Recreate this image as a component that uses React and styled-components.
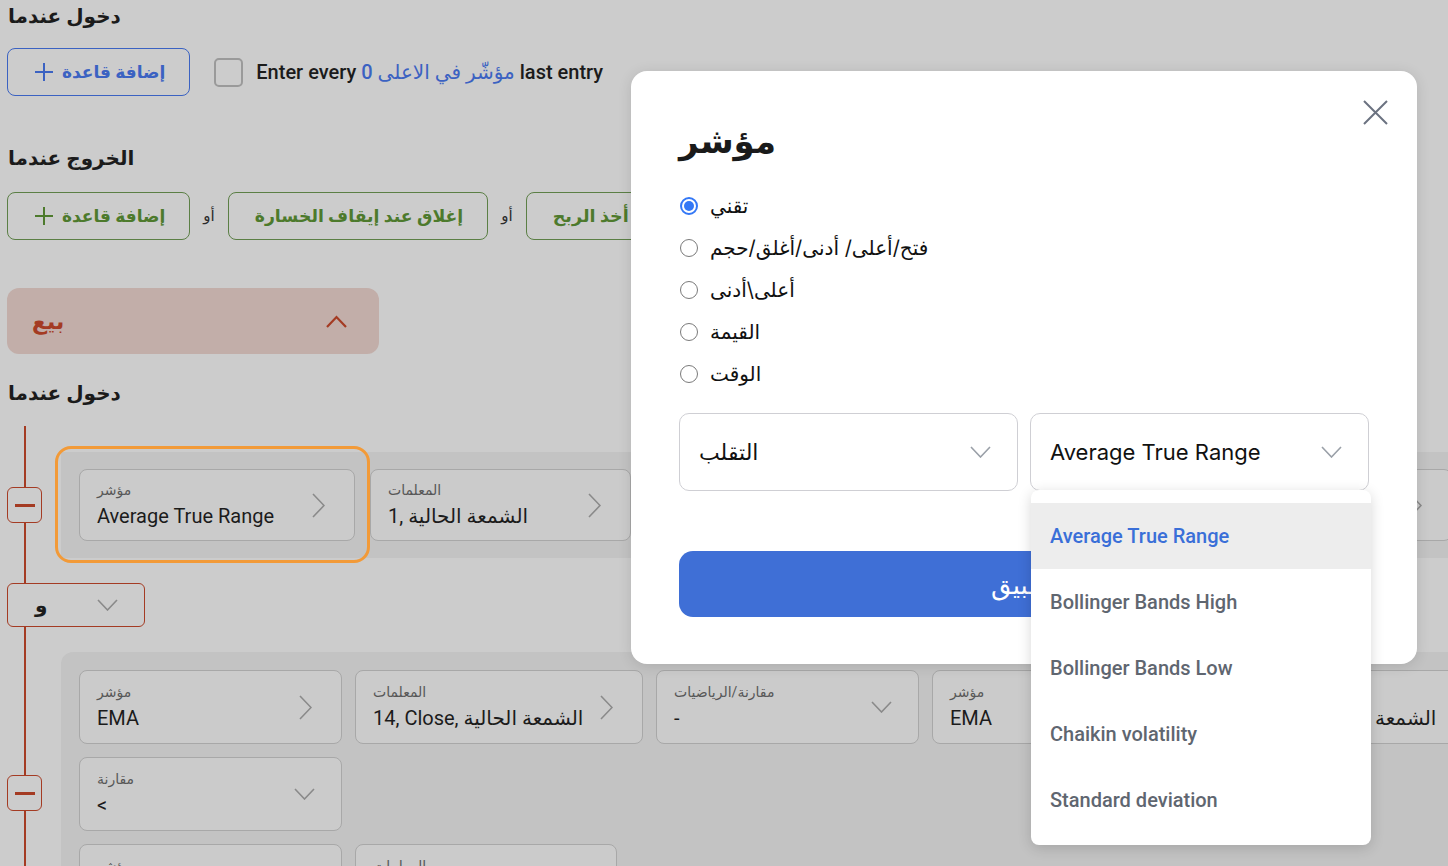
import React from "react";
import styled, { createGlobalStyle } from "styled-components";

const RED = "#a43b23";
const BLUE_DIM = "#3b62c2";
const GREEN_DIM = "#4d7a2c";

const GlobalStyle = createGlobalStyle`
  html, body { margin: 0; padding: 0; background: #cccccc; overflow: hidden; }
  * { box-sizing: border-box; }
`;

const Stage = styled.div`
  position: relative;
  width: 1448px;
  height: 866px;
  overflow: hidden;
  background: #cccccc;
  font-family: Roboto, "DejaVu Sans", sans-serif;
  color: #1b1b1b;
`;

const Page = styled.div`
  padding: 4px 0 0 7px;
  display: flex;
  flex-direction: column;
  align-items: flex-start;
`;

const SectionTitle = styled.h2`
  margin: ${(p) => p.$mt || 0}px 0 0 1px;
  font-size: 20px;
  line-height: 24px;
  font-weight: 700;
  color: #1b1b1b;
`;

const ActionRow = styled.div`
  display: flex;
  align-items: center;
  gap: ${(p) => p.$gap || 10}px;
  margin-top: ${(p) => p.$mt}px;
`;

const OutlineButton = styled.button`
  height: 48px;
  flex-shrink: 0;
  display: flex;
  align-items: center;
  gap: 8px;
  padding: 0 24px 0 26px;
  border: 1px solid ${(p) => (p.$tone === "green" ? "#5b7f45" : BLUE_DIM)};
  border-radius: 8px;
  background: transparent;
  color: ${(p) => (p.$tone === "green" ? GREEN_DIM : BLUE_DIM)};
  font: 700 ${(p) => p.$size || 17}px Roboto, "DejaVu Sans", sans-serif;
  white-space: nowrap;
`;

const OrText = styled.span`
  padding: 0 3px;
  font-size: 15px;
  color: #2a2a2a;
`;

const CheckLabel = styled.label`
  display: flex;
  align-items: center;
  gap: 13px;
  font-size: 20px;
  font-weight: 500;
  white-space: nowrap;
`;

const CheckBox = styled.span`
  width: 29px;
  height: 29px;
  border: 2px solid #9a9a9a;
  border-radius: 5px;
`;

const BlueText = styled.span`
  color: ${BLUE_DIM};
`;

const SellHeader = styled.div`
  margin-top: 48px;
  width: 372px;
  height: 66px;
  display: flex;
  align-items: center;
  justify-content: space-between;
  padding: 0 32px 0 25px;
  background: #c2aea9;
  border-radius: 12px;
  color: ${RED};
  font-size: 22px;
  font-weight: 700;
`;

const Tree = styled.div`
  position: relative;
  align-self: stretch;
  margin-top: 21px;
  padding-top: 26px;
  display: flex;
  flex-direction: column;
  align-items: flex-start;
  gap: 25px;
  &::before {
    content: "";
    position: absolute;
    left: 17px;
    top: 0;
    bottom: 0;
    width: 2px;
    background: ${RED};
  }
`;

const Group = styled.div`
  align-self: stretch;
  display: grid;
  grid-template-columns: 54px 1fr;
`;

const Rail = styled.div`
  position: relative;
  z-index: 1;
  display: flex;
  align-items: ${(p) => (p.$top ? "flex-start" : "center")};
  padding-top: ${(p) => p.$top || 0}px;
`;

const MinusBox = styled.button`
  width: 35px;
  height: 36px;
  padding: 0;
  display: flex;
  align-items: center;
  justify-content: center;
  border: 1px solid ${RED};
  border-radius: 6px;
  background: #cccccc;
`;

const MinusBar = styled.span`
  width: 20px;
  height: 3px;
  background: ${RED};
`;

const Band = styled.div`
  display: flex;
  gap: 15px;
  padding: 17px 18px;
  background: #c3c3c3;
`;

const Panel = styled.div`
  display: flex;
  flex-direction: column;
  gap: 13px;
  padding: 18px;
  background: #c3c3c3;
  border-top-left-radius: 12px;
`;

const CardRow = styled.div`
  display: flex;
  gap: 13px;
`;

const HighlightWrap = styled.div`
  position: relative;
  flex-shrink: 0;
`;

const Ring = styled.span`
  position: absolute;
  top: -23px;
  left: -24px;
  right: -15px;
  bottom: -22px;
  border: 3px solid #f29a38;
  border-radius: 16px;
  pointer-events: none;
`;

const Card = styled.div`
  width: ${(p) => p.$w}px;
  height: ${(p) => p.$h || 74}px;
  flex-shrink: 0;
  display: flex;
  align-items: center;
  justify-content: space-between;
  padding: 0 ${(p) => (p.$down ? 26 : 29)}px 0 17px;
  border: 1px solid #a8a8a8;
  border-radius: 8px;
  background: #cbcbcb;
`;

const CardText = styled.div`
  display: flex;
  flex-direction: column;
  gap: 4px;
  white-space: nowrap;
`;

const CardLabel = styled.span`
  font-size: 14px;
  line-height: 18px;
  color: #575757;
`;

const CardValue = styled.span`
  font-size: 20px;
  line-height: 26px;
  color: #1b1b1b;
`;

const JoinSelect = styled.div`
  position: relative;
  z-index: 1;
  width: 138px;
  height: 44px;
  display: flex;
  align-items: center;
  justify-content: space-between;
  padding: 0 26px 0 27px;
  border: 1px solid ${RED};
  border-radius: 6px;
  background: #cccccc;
  font-size: 20px;
  font-weight: 600;
`;

/* ---------- Modal ---------- */

const Modal = styled.div`
  position: absolute;
  left: 631px;
  top: 71px;
  width: 786px;
  height: 593px;
  padding: 48px 48px 0;
  background: #ffffff;
  border-radius: 16px;
  box-shadow: 0 2px 14px rgba(0, 0, 0, 0.12);
  font-family: Inter, "DejaVu Sans", sans-serif;
  color: #111;
  z-index: 5;
`;

const CloseButton = styled.button`
  position: absolute;
  top: 29px;
  right: 29px;
  width: 25px;
  height: 25px;
  padding: 0;
  border: none;
  background: transparent;
  display: flex;
`;

const ModalTitle = styled.h2`
  margin: 0;
  font-size: 34px;
  line-height: 44px;
  font-weight: 700;
  color: #1a1a1a;
`;

const RadioList = styled.div`
  margin-top: 22px;
  display: flex;
  flex-direction: column;
`;

const RadioRow = styled.label`
  height: 42px;
  display: flex;
  align-items: center;
  gap: 12px;
  padding-left: 1px;
  font-size: 20px;
`;

const RadioDot = styled.span`
  width: 18px;
  height: 18px;
  border-radius: 50%;
  border: ${(p) => (p.$on ? "2px solid #3478f6" : "1.5px solid #7a7a7a")};
  display: flex;
  align-items: center;
  justify-content: center;
  &::after {
    content: "";
    width: 10px;
    height: 10px;
    border-radius: 50%;
    background: ${(p) => (p.$on ? "#3478f6" : "transparent")};
  }
`;

const SelectGrid = styled.div`
  margin-top: 18px;
  display: grid;
  grid-template-columns: 1fr 1fr;
  gap: 12px;
`;

const SelectBox = styled.div`
  position: relative;
  height: 78px;
  display: flex;
  align-items: center;
  justify-content: space-between;
  padding: 0 26px 0 19px;
  border: 1px solid #cfcfd4;
  border-radius: 10px;
  font-size: 22px;
  color: #111;
`;

const Menu = styled.div`
  position: absolute;
  top: 76px;
  left: 0;
  width: 340px;
  padding: 13px 0 12px;
  background: #fff;
  border-radius: 8px;
  box-shadow: 0 3px 14px rgba(0, 0, 0, 0.16);
  z-index: 3;
`;

const MenuItem = styled.div`
  height: 66px;
  display: flex;
  align-items: center;
  padding-left: 19px;
  font: 500 20px Roboto, sans-serif;
  color: ${(p) => (p.$active ? "#3a6fd8" : "#5f6670")};
  background: ${(p) => (p.$active ? "#ededed" : "transparent")};
`;

const ApplyButton = styled.button`
  margin-top: 60px;
  width: 100%;
  height: 66px;
  border: none;
  border-radius: 14px;
  background: #3f6fd6;
  color: #fff;
  font: 500 26px Inter, "DejaVu Sans", sans-serif;
`;

/* ---------- Icons ---------- */

const Plus = ({ color }) => (
  <svg width="20" height="20" viewBox="0 0 20 20">
    <path d="M10 1v18M1 10h18" stroke={color} strokeWidth="2" fill="none" />
  </svg>
);

const ChevronRight = () => (
  <svg width="13" height="25" viewBox="0 0 13 25">
    <path d="M1 1l11 11.5L1 24" stroke="#8a8a8a" strokeWidth="1.6" fill="none" />
  </svg>
);

const ChevronDown = ({ color = "#8a8a8a", w = 21 }) => (
  <svg width={w} height="12" viewBox="0 0 21 12">
    <path d="M1 1l9.5 10L20 1" stroke={color} strokeWidth="1.6" fill="none" />
  </svg>
);

const ChevronUp = () => (
  <svg width="21" height="13" viewBox="0 0 21 13">
    <path d="M1 12L10.5 2 20 12" stroke={RED} strokeWidth="2.2" fill="none" />
  </svg>
);

const CloseIcon = () => (
  <svg width="25" height="25" viewBox="0 0 25 25">
    <path d="M1 1l23 23M24 1L1 24" stroke="#6b7280" strokeWidth="2" fill="none" />
  </svg>
);

const FieldCard = ({ w, h, label, value, down }) => (
  <Card $w={w} $h={h} $down={down}>
    <CardText>
      <CardLabel>{label}</CardLabel>
      <CardValue>{value}</CardValue>
    </CardText>
    {down ? <ChevronDown /> : <ChevronRight />}
  </Card>
);

const radios = ["تقني", "فتح/أعلى/ أدنى/أغلق/حجم", "أعلى\\أدنى", "القيمة", "الوقت"];
const menuItems = [
  "Average True Range",
  "Bollinger Bands High",
  "Bollinger Bands Low",
  "Chaikin volatility",
  "Standard deviation",
];

export default function App() {
  return (
    <Stage>
      <GlobalStyle />
      <Page>
        <SectionTitle>دخول عندما</SectionTitle>
        <ActionRow $mt={20} $gap={24}>
          <OutlineButton>
            <Plus color={BLUE_DIM} />
            إضافة قاعدة
          </OutlineButton>
          <CheckLabel>
            <CheckBox />
            <span>
              Enter every <BlueText>0 مؤشّر في الاعلى</BlueText> last entry
            </span>
          </CheckLabel>
        </ActionRow>

        <SectionTitle $mt={50}>الخروج عندما</SectionTitle>
        <ActionRow $mt={22}>
          <OutlineButton $tone="green">
            <Plus color={GREEN_DIM} />
            إضافة قاعدة
          </OutlineButton>
          <OrText>أو</OrText>
          <OutlineButton $tone="green" $size={17.3}>
            إغلاق عند إيقاف الخسارة
          </OutlineButton>
          <OrText>أو</OrText>
          <OutlineButton $tone="green" $size={17.6}>
            أخذ الربح
          </OutlineButton>
        </ActionRow>

        <SellHeader>
          <span>بيع</span>
          <ChevronUp />
        </SellHeader>

        <SectionTitle $mt={27}>دخول عندما</SectionTitle>

        <Tree>
          <Group>
            <Rail>
              <MinusBox>
                <MinusBar />
              </MinusBox>
            </Rail>
            <Band>
              <HighlightWrap>
                <FieldCard w={276} h={72} label="مؤشر" value="Average True Range" />
                <Ring />
              </HighlightWrap>
              <FieldCard w={261} h={72} label="المعلمات" value="1, الشمعة الحالية" />
              <FieldCard w={263} h={72} label="مقارنة/الرياضيات" value="-" down />
              <FieldCard w={263} h={72} label="مؤشر" value="EMA" />
              <FieldCard w={250} h={72} label="المعلمات" value="1, الحالية" />
            </Band>
          </Group>

          <JoinSelect>
            <span>و</span>
            <ChevronDown />
          </JoinSelect>

          <Group>
            <Rail $top={123}>
              <MinusBox>
                <MinusBar />
              </MinusBox>
            </Rail>
            <Panel>
              <CardRow>
                <FieldCard w={263} label="مؤشر" value="EMA" />
                <FieldCard w={288} label="المعلمات" value="14, Close, الشمعة الحالية" />
                <FieldCard w={263} label="مقارنة/الرياضيات" value="-" down />
                <FieldCard w={263} label="مؤشر" value="EMA" />
                <FieldCard w={288} label="المعلمات" value="14, Close, الشمعة الحالية" />
              </CardRow>
              <CardRow>
                <FieldCard w={263} label="مقارنة" value="<" down />
              </CardRow>
              <CardRow>
                <FieldCard w={263} label="مؤشر" value="EMA" />
                <FieldCard w={262} label="المعلمات" value="14, Close, الشمعة الحالية" />
              </CardRow>
            </Panel>
          </Group>
        </Tree>
      </Page>

      <Modal>
        <CloseButton aria-label="close">
          <CloseIcon />
        </CloseButton>
        <ModalTitle>مؤشر</ModalTitle>
        <RadioList>
          {radios.map((r, i) => (
            <RadioRow key={r}>
              <RadioDot $on={i === 0} />
              <span>{r}</span>
            </RadioRow>
          ))}
        </RadioList>
        <SelectGrid>
          <SelectBox>
            <span>التقلب</span>
            <ChevronDown color="#9aa0a8" />
          </SelectBox>
          <SelectBox>
            <span>Average True Range</span>
            <ChevronDown color="#9aa0a8" />
            <Menu>
              {menuItems.map((m, i) => (
                <MenuItem key={m} $active={i === 0}>
                  {m}
                </MenuItem>
              ))}
            </Menu>
          </SelectBox>
        </SelectGrid>
        <ApplyButton>تطبيق</ApplyButton>
      </Modal>
    </Stage>
  );
}
